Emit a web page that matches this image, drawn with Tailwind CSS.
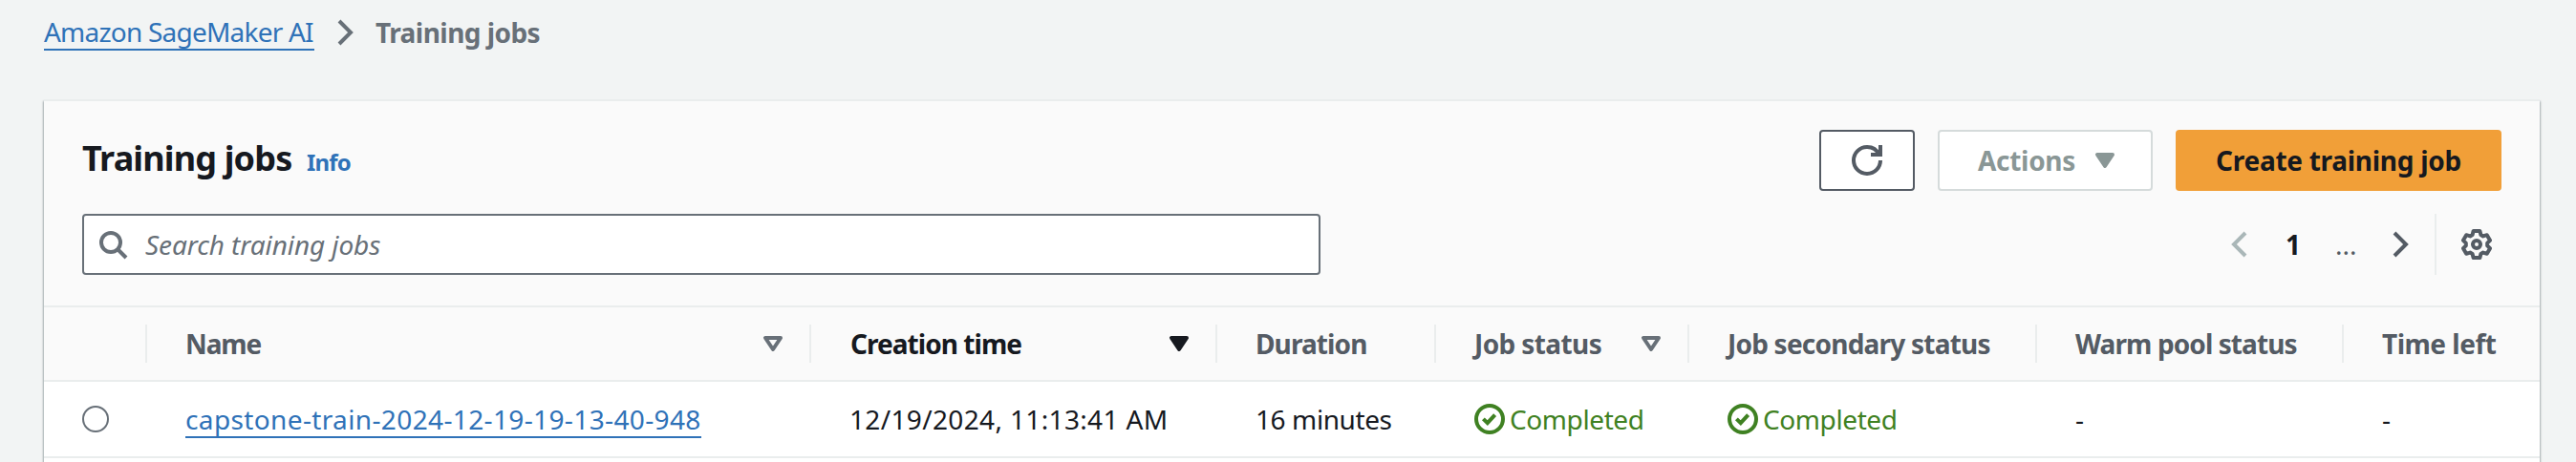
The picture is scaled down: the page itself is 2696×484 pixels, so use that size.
<!DOCTYPE html>
<html lang="en">
<head>
<meta charset="utf-8">
<title>Training jobs</title>
<script src="https://cdn.jsdelivr.net/npm/@tailwindcss/browser@4"></script>
</head>
<body class="h-[484px] w-[2696px] overflow-hidden bg-[#f2f4f4] font-['Noto_Sans',sans-serif] text-[28px] leading-8 whitespace-nowrap text-[#16191f]">
<svg class="hidden">
  <symbol id="chevron" viewBox="0 0 16 16"><path d="m5 2 6 6-6 6" fill="none" stroke="currentColor" stroke-width="2"/></symbol>
  <symbol id="caret" viewBox="0 0 16 16"><path d="M4 5h8l-4 6-4-6z" fill="currentColor" stroke="currentColor" stroke-width="2" stroke-linejoin="round"/></symbol>
  <symbol id="caret-open" viewBox="0 0 16 16"><path d="M4 5h8l-4 6-4-6z" fill="none" stroke="currentColor" stroke-width="2" stroke-linejoin="round"/></symbol>
  <symbol id="done" viewBox="0 0 16 16"><g fill="none" stroke="currentColor" stroke-width="2"><circle cx="8" cy="8" r="7"/><path d="m4.7 7.9 2.2 2.2 3.9-4.3"/></g></symbol>
</svg>

<nav class="flex h-[104px] items-start pt-[17px] pl-[46px]">
  <a class="h-9 w-[283px] border-b-2 border-[#2f72b8] tracking-[-0.78px] text-[#2f72b8]">Amazon SageMaker AI</a>
  <svg class="mt-px ml-4 size-8 text-[#687078]"><use href="#chevron"/></svg>
  <span class="mt-px ml-4 font-bold tracking-[-0.55px] text-[#687078]">Training jobs</span>
</nav>

<main class="ml-[46px] h-[380px] w-[2612px] border-t-2 border-[#eaeded] bg-white shadow-[0_2px_2px_0_rgba(0,28,36,0.3),1px_2px_2px_0_rgba(0,28,36,0.2),-1px_2px_2px_0_rgba(0,28,36,0.2)]">
  <header class="h-[216px] border-b-2 border-[#eaeded] bg-[#fafafa] pt-[30px] pr-10 pl-10">
    <div class="flex h-16 items-center">
      <h1 class="-mt-1 w-[222px] text-[36px] font-bold tracking-[-0.85px]">Training jobs</h1>
      <a class="mt-1 ml-[13px] text-[24px] font-bold tracking-[-0.8px] text-[#2f72b8]">Info</a>
      <div class="ml-auto flex gap-6 font-bold">
        <button class="flex h-16 w-[100px] items-center justify-center rounded-[4px] border-2 border-[#545b64] bg-white text-[#545b64]">
          <svg class="size-8" viewBox="0 0 16 16" fill="none" stroke="currentColor" stroke-width="2"><path d="M10 5h5V0"/><path d="M15 8a6.957 6.957 0 0 1-7 7 6.957 6.957 0 0 1-7-7 6.957 6.957 0 0 1 7-7 6.87 6.87 0 0 1 6.3 4"/></svg>
        </button>
        <button class="flex h-16 w-[225px] items-center rounded-[4px] border-2 border-[#d5dbdb] bg-white pl-10 text-[#8a9796]">
          <span class="w-[117px] text-left tracking-[-0.3px]">Actions</span>
          <svg class="size-8"><use href="#caret"/></svg>
        </button>
        <button class="flex h-16 w-[341px] items-center justify-center rounded-[4px] bg-[#f19f38] tracking-[-0.28px]">Create training job</button>
      </div>
    </div>
    <div class="mt-6 flex h-16 items-center">
      <div class="flex h-16 w-[1296px] items-center rounded-[4px] border-2 border-[#687078] bg-white pl-[14px] text-[#687078]">
        <svg class="size-8" viewBox="0 0 16 16" fill="none" stroke="currentColor" stroke-width="2"><circle cx="7" cy="7" r="5"/><path d="m15 15-4.5-4.5"/></svg>
        <span class="ml-[18px] tracking-[-0.1px] italic">Search training jobs</span>
      </div>
      <div class="ml-auto flex h-16 items-center pr-[10px] text-[#545b64]">
        <svg class="size-8 rotate-180 text-[#aab7b8]"><use href="#chevron"/></svg>
        <span class="ml-8 w-[52px] font-bold text-[#16191f]">1</span>
        <span class="w-[52px]">...</span>
        <svg class="size-8"><use href="#chevron"/></svg>
        <span class="ml-5 h-16 w-[2px] bg-[#eaeded]"></span>
        <svg class="ml-[26px] size-8" viewBox="0 0 16 16" fill="none" stroke="currentColor" stroke-width="2" stroke-linejoin="round"><circle cx="8" cy="8" r="2"/><path d="M6.300 1h3.400l.5 2 1.200.7 2-.6 1.600 2.800L13.600 7.300v1.400L15 10.100l-1.600 2.800-2-.6-1.200.7-.5 2H6.300l-.5-2-1.200-.7-2 .6L1 10.100l1.400-1.400V7.300L1 5.900l1.600-2.800 2 .6L5.800 3z"/></svg>
      </div>
    </div>
  </header>

  <div class="grid h-[78px] grid-cols-[106px_695px_425px_229px_265px_364px_321px_207px] items-center border-b-2 border-[#eaeded] bg-[#fafafa] font-bold text-[#545b64]">
    <span></span>
    <div class="flex h-10 items-center border-l-2 border-[#eaeded] pl-10"><span class="tracking-[-1.1px]">Name</span><svg class="mr-[22px] ml-auto size-8 text-[#687078]"><use href="#caret-open"/></svg></div>
    <div class="flex h-10 items-center border-l-2 border-[#eaeded] pl-[41px] text-[#16191f]"><span class="tracking-[-0.95px]">Creation time</span><svg class="mr-[22px] ml-auto size-8"><use href="#caret"/></svg></div>
    <div class="flex h-10 items-center border-l-2 border-[#eaeded] pl-10"><span class="tracking-[-0.9px]">Duration</span></div>
    <div class="flex h-10 items-center border-l-2 border-[#eaeded] pl-10"><span class="tracking-[-0.6px]">Job status</span><svg class="mr-[22px] ml-auto size-8 text-[#687078]"><use href="#caret-open"/></svg></div>
    <div class="flex h-10 items-center border-l-2 border-[#eaeded] pl-10"><span class="tracking-[-0.78px]">Job secondary status</span></div>
    <div class="flex h-10 items-center border-l-2 border-[#eaeded] pl-10"><span class="tracking-[-0.9px]">Warm pool status</span></div>
    <div class="flex h-10 items-center border-l-2 border-[#eaeded] pl-10"><span class="tracking-[-0.5px]">Time left</span></div>
  </div>

  <div class="grid h-20 grid-cols-[106px_695px_425px_229px_265px_364px_321px_207px] items-center border-b-2 border-[#eaeded]">
    <span class="ml-10 size-7 rounded-full border-2 border-[#687078] bg-white"></span>
    <div class="pl-[42px]"><a class="mt-[3px] block h-9 w-[540px] border-b-2 border-[#2f72b8] tracking-[0.37px] text-[#2f72b8]">capstone-train-2024-12-19-19-13-40-948</a></div>
    <span class="pl-[42px] tracking-[0.35px]">12/19/2024, 11:13:41 AM</span>
    <span class="pl-[42px] tracking-[-0.4px]">16 minutes</span>
    <div class="flex items-center pl-[42px] text-[#3f8122]"><svg class="mr-[5px] size-8"><use href="#done"/></svg><span class="tracking-[-0.4px]">Completed</span></div>
    <div class="flex items-center pl-[42px] text-[#3f8122]"><svg class="mr-[5px] size-8"><use href="#done"/></svg><span class="tracking-[-0.4px]">Completed</span></div>
    <span class="pl-[42px]">-</span>
    <span class="pl-[42px]">-</span>
  </div>
</main>
</body>
</html>
